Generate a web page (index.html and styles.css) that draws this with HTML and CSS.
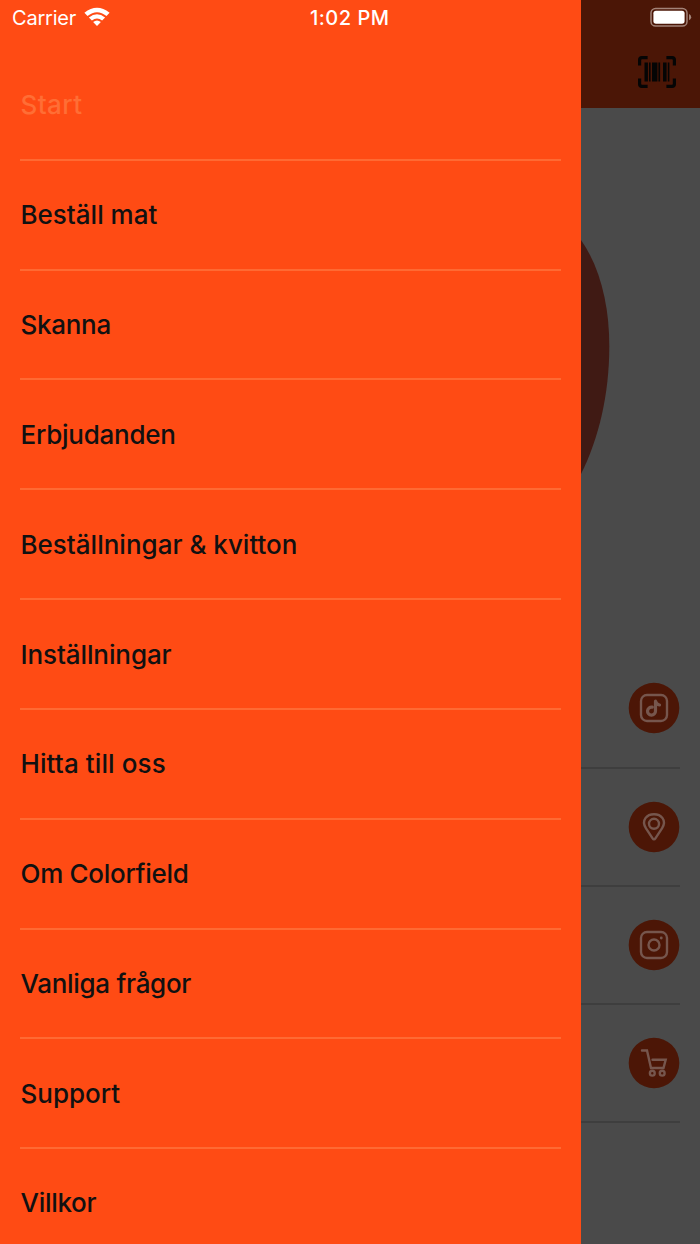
FILE: index.html
```
<!DOCTYPE html>
<html lang="sv">
<head>
<meta charset="utf-8">
<title>Colorfield</title>
<link rel="stylesheet" href="styles.css">
</head>
<body>
<div class="screen">
  <aside class="drawer">
    <div class="status">
      <span class="carrier">Carrier</span>
      <svg class="wifi" width="26" height="20" viewBox="0 0 26 20" fill="#fff">
        <path d="M.4 5.8Q13-4.4 25.6 5.8L22.5 9.1Q13 1.4 3.5 9.1Z"/>
        <path d="M4.9 10.5Q13 3.8 21.1 10.5L18.1 13.6Q13 9.6 7.9 13.6Z"/>
        <path d="M9.1 15Q13 11.9 16.9 15L13 18.9Z"/>
      </svg>
      <span class="time">1:02 PM</span>
    </div>
    <nav class="menu">
      <a class="item current"><span class="w-start">Start</span></a>
      <a class="item"><span class="w-order">Beställ mat</span></a>
      <a class="item"><span class="w-scan">Skanna</span></a>
      <a class="item"><span class="w-offers">Erbjudanden</span></a>
      <a class="item"><span class="w-receipts">Beställningar &amp; kvitton</span></a>
      <a class="item"><span class="w-settings">Inställningar</span></a>
      <a class="item"><span class="w-find">Hitta till oss</span></a>
      <a class="item"><span class="w-about">Om Colorfield</span></a>
      <a class="item"><span class="w-faq">Vanliga frågor</span></a>
      <a class="item"><span class="w-support">Support</span></a>
      <a class="item"><span class="w-terms">Villkor</span></a>
    </nav>
  </aside>
  <main class="page">
    <header class="topbar">
      <svg class="battery" width="42" height="20" viewBox="0 0 42 20">
        <rect x="1" y="1.4" width="36" height="17.6" rx="4.6" fill="none" stroke="#a38378" stroke-width="1.5"/>
        <rect x="3.4" y="3.7" width="31.2" height="13" rx="2.6" fill="#fff"/>
        <path d="M39 7.1Q41.2 8.1 41.2 10.2T39 13.3Z" fill="#a38378"/>
      </svg>
      <svg class="scan" width="38" height="32" viewBox="0 0 38 32">
        <path d="M1.6 9.5V4Q1.6 1.6 4 1.6H9.6M28.4 1.6H34Q36.4 1.6 36.4 4V9.5M36.4 22.5V28Q36.4 30.4 34 30.4H28.4M9.6 30.4H4Q1.6 30.4 1.6 28V22.5" fill="none" stroke="#050505" stroke-width="3.2"/>
        <path d="M6.5 6.5h3.4v19H6.5zM11 6.5h1.6v19H11zM14 6.5h5.4v19H14zM20.4 6.5h1.7v19h-1.7zM25 6.5h3.6v19H25zM29.8 6.5h1.6v19h-1.6z" fill="#050505"/>
      </svg>
    </header>
    <section class="hero">
      <svg width="30" height="236" viewBox="0 0 30 236">
        <path d="M0 1C19 28 28.3 66 28.3 107C28.3 155 18 199 0 235Z" fill="#401a14"/>
      </svg>
    </section>
    <div class="links">
      <div class="link"><svg width="52" height="52" viewBox="0 0 52 52"><circle cx="26" cy="26" r="25.3"/>
        <g class="line"><rect x="13" y="13" width="26" height="26" rx="6"/><path d="M24.2 25.2A4 4 0 1 0 27.5 29V19.2Q28.5 22.5 31.5 23" stroke-width="3.2"/></g></svg></div>
      <div class="link"><svg width="52" height="52" viewBox="0 0 52 52"><circle cx="26" cy="26" r="25.3"/>
        <g class="line"><path d="M26 38.4Q25.2 38.4 24.6 37.4L18 27.4C12.7 18.8 19.2 13.3 26 13.3S39.3 18.8 34 27.4L27.4 37.4Q26.8 38.4 26 38.4Z"/><circle cx="26" cy="22.8" r="5"/></g></svg></div>
      <div class="link"><svg width="52" height="52" viewBox="0 0 52 52"><circle cx="26" cy="26" r="25.3"/>
        <g class="line"><rect x="13" y="13" width="26" height="26" rx="6"/><circle cx="26" cy="26" r="5.5"/><path d="M33.2 19h.1" stroke-width="2.8"/></g></svg></div>
      <div class="link"><svg width="52" height="52" viewBox="0 0 52 52"><circle cx="26" cy="26" r="25.3"/>
        <g class="line"><path d="M14 13.5H19L23 31H35.5L37.7 22.7H24.5" stroke-linejoin="miter"/><circle cx="24.3" cy="36.2" r="2.4"/><circle cx="34.2" cy="36.2" r="2.4"/></g></svg></div>
    </div>
  </main>
</div>
</body>
</html>
```
FILE: styles.css
```
body { margin: 0; }
.screen {
  display: grid;
  grid-template-columns: 581px 1fr;
  width: 700px;
  height: 1244px;
  overflow: hidden;
  background: #4a4a4a;
  font-family: Inter, "Liberation Sans", sans-serif;
}
.drawer { background: #ff4b14; height: 1244px; overflow: hidden; }
.status {
  display: flex;
  height: 36px;
  align-items: center;
  padding-left: 12px;
  color: #fff;
  font-size: 20px;
  white-space: nowrap;
}
.carrier { width: 72px; letter-spacing: -0.2px; }
.wifi { display: block; margin-top: -3px; }
.time { margin-left: 200px; font-weight: 500; letter-spacing: 0.5px; }
.menu { padding: 15px 20px 0; }
.item {
  display: flex;
  box-sizing: border-box;
  height: 109.83px;
  align-items: center;
  border-bottom: 2px solid #ff6a33;
  color: #111;
  font-size: 26px;
  font-weight: 500;
  white-space: nowrap;
}
.item span { margin-left: 0.5px; }
.item:last-child { border-bottom: 0; padding-bottom: 3px; }
.current { color: #ff6e35; }
.current span { letter-spacing: 0.4px; }
.item .w-scan { letter-spacing: -0.3px; }
.item .w-offers { letter-spacing: -0.25px; }
.item .w-settings { letter-spacing: -0.1px; }
.item .w-find { letter-spacing: 0.1px; }
.item .w-about { letter-spacing: -0.3px; }
.item .w-faq { letter-spacing: -0.3px; }
.item .w-terms { letter-spacing: -0.3px; }
.page { height: 1244px; }
.topbar {
  display: flex;
  flex-direction: column;
  box-sizing: border-box;
  height: 108px;
  padding: 7px 0 0 57px;
  gap: 29px;
  background: #4b1606;
}
.battery { margin-left: 11.5px; }
.hero { box-sizing: border-box; height: 542.3px; padding-top: 131px; }
.hero svg, .link svg, .topbar svg { display: block; }
.links { margin-right: 20px; }
.link {
  display: flex;
  box-sizing: border-box;
  height: 118.3px;
  align-items: center;
  justify-content: flex-end;
  border-bottom: 2px solid #3e3e3e;
}
.link svg { fill: #4c1606; }
.line { fill: none; stroke: #76564d; stroke-width: 2.4; stroke-linecap: round; stroke-linejoin: round; }
```
